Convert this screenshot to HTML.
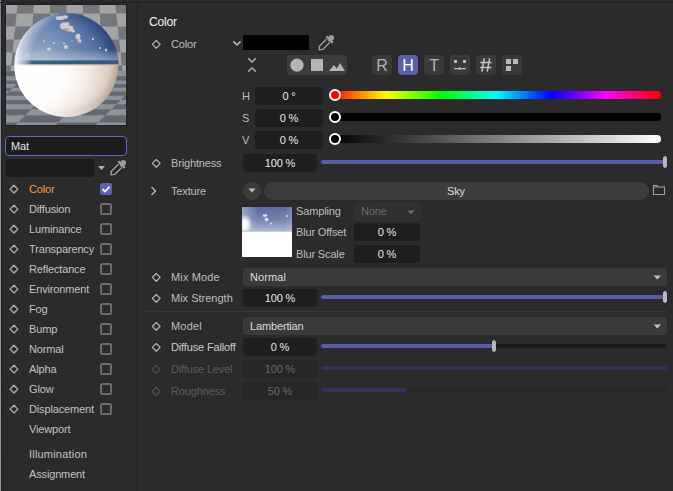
<!DOCTYPE html>
<html><head><meta charset="utf-8"><style>
html,body{margin:0;padding:0;}
body{width:673px;height:491px;background:#2b2b2b;position:relative;overflow:hidden;font-family:"Liberation Sans",sans-serif;}
body>div,body>svg{position:absolute;}
.t{white-space:nowrap;letter-spacing:-0.15px}
</style></head><body>
<div style="left:0;top:0;width:1px;height:491px;background:linear-gradient(#7886a8,#8a95a8 40%,#9a9a9a)"></div>
<div style="left:1px;top:0px;width:1px;height:491px;background:#202020;border-radius:0px;"></div>
<div style="left:0px;top:2px;width:673px;height:1px;background:#202020;border-radius:0px;"></div>
<div style="left:137px;top:4px;width:1px;height:487px;background:#202020;border-radius:0px;"></div>
<div style="left:5px;top:4px;width:122px;height:122px;background:#1f1f1f;border-radius:0px;"></div>
<svg style="left:6px;top:5px" width="120" height="120" viewBox="0 0 120 120">
<defs>
<radialGradient id="sky" gradientUnits="userSpaceOnUse" cx="32" cy="64" r="92">
<stop offset="0" stop-color="#b4c0d2"/><stop offset="0.25" stop-color="#8a9ec0"/><stop offset="0.5" stop-color="#6681b0"/><stop offset="0.75" stop-color="#4b689a"/><stop offset="1" stop-color="#304778"/>
</radialGradient>
<radialGradient id="rim" gradientUnits="userSpaceOnUse" cx="72" cy="56" r="64">
<stop offset="0" stop-color="#fff" stop-opacity="0"/><stop offset="0.72" stop-color="#fff" stop-opacity="0"/><stop offset="0.9" stop-color="#ffffff" stop-opacity="0.5"/><stop offset="1" stop-color="#ffffff" stop-opacity="1"/>
</radialGradient>
<linearGradient id="hzb" x1="0" y1="0" x2="120" y2="0" gradientUnits="userSpaceOnUse">
<stop offset="0" stop-color="#3e6a88" stop-opacity="0"/><stop offset="0.1" stop-color="#3e6a88" stop-opacity="0"/><stop offset="0.22" stop-color="#3a6080" stop-opacity="1"/><stop offset="1" stop-color="#36587a" stop-opacity="1"/>
</linearGradient>
<radialGradient id="edge" gradientUnits="userSpaceOnUse" cx="56" cy="54" r="58">
<stop offset="0" stop-color="#50443c" stop-opacity="0"/><stop offset="0.84" stop-color="#50443c" stop-opacity="0"/><stop offset="1" stop-color="#50443c" stop-opacity="0.18"/>
</radialGradient>
<radialGradient id="low" gradientUnits="userSpaceOnUse" cx="25" cy="62" r="95">
<stop offset="0" stop-color="#ffffff"/><stop offset="0.4" stop-color="#fefdfc"/><stop offset="0.6" stop-color="#f3eae4"/><stop offset="0.8" stop-color="#e0d0c4"/><stop offset="0.92" stop-color="#cdb8a8"/><stop offset="1" stop-color="#b8a290"/>
</radialGradient>
<radialGradient id="skyedge" gradientUnits="userSpaceOnUse" cx="50" cy="62" r="60">
<stop offset="0" stop-color="#1e3460" stop-opacity="0"/><stop offset="0.75" stop-color="#1e3460" stop-opacity="0"/><stop offset="1" stop-color="#1e3460" stop-opacity="0.45"/>
</radialGradient>
<linearGradient id="hz" x1="0" y1="0" x2="0" y2="1">
<stop offset="0" stop-color="#c0ccda" stop-opacity="0"/><stop offset="1" stop-color="#b8c6d6" stop-opacity="0.6"/>
</linearGradient>
<filter id="bl" x="-10%" y="-200%" width="120%" height="500%"><feGaussianBlur stdDeviation="0.7"/></filter>
<clipPath id="sp"><circle cx="60.3" cy="60" r="52"/></clipPath>
<clipPath id="top"><rect x="0" y="0" width="120" height="59.5"/></clipPath>
<clipPath id="bot"><rect x="0" y="59.5" width="120" height="61"/></clipPath>
</defs>
<rect width="120" height="120" fill="#a2a4a6"/><polygon points="-21.0,0.0 -4.7,0.0 -5.9,8.5 -22.5,8.5" fill="#747679"/><polygon points="11.6,0.0 27.9,0.0 27.3,8.5 10.7,8.5" fill="#747679"/><polygon points="44.2,0.0 60.5,0.0 60.5,8.5 43.9,8.5" fill="#747679"/><polygon points="76.8,0.0 93.1,0.0 93.7,8.5 77.1,8.5" fill="#747679"/><polygon points="109.4,0.0 125.7,0.0 126.9,8.5 110.3,8.5" fill="#747679"/><polygon points="142.0,0.0 158.3,0.0 160.1,8.5 143.5,8.5" fill="#747679"/><polygon points="-39.1,8.5 -22.5,8.5 -24.9,21.5 -41.9,21.5" fill="#747679"/><polygon points="-5.9,8.5 10.7,8.5 9.3,21.5 -7.8,21.5" fill="#747679"/><polygon points="27.3,8.5 43.9,8.5 43.4,21.5 26.4,21.5" fill="#747679"/><polygon points="60.5,8.5 77.1,8.5 77.6,21.5 60.5,21.5" fill="#747679"/><polygon points="93.7,8.5 110.3,8.5 111.7,21.5 94.6,21.5" fill="#747679"/><polygon points="126.9,8.5 143.5,8.5 145.9,21.5 128.8,21.5" fill="#747679"/><polygon points="-24.9,21.5 -7.8,21.5 -9.6,34.5 -27.2,34.5" fill="#747679"/><polygon points="9.3,21.5 26.4,21.5 25.4,34.5 7.9,34.5" fill="#747679"/><polygon points="43.4,21.5 60.5,21.5 60.5,34.5 43.0,34.5" fill="#747679"/><polygon points="77.6,21.5 94.6,21.5 95.6,34.5 78.0,34.5" fill="#747679"/><polygon points="111.7,21.5 128.8,21.5 130.6,34.5 113.1,34.5" fill="#747679"/><polygon points="145.9,21.5 162.9,21.5 165.7,34.5 148.2,34.5" fill="#747679"/><polygon points="-44.7,34.5 -27.2,34.5 -29.5,47.5 -47.5,47.5" fill="#747679"/><polygon points="-9.6,34.5 7.9,34.5 6.5,47.5 -11.5,47.5" fill="#747679"/><polygon points="25.4,34.5 43.0,34.5 42.5,47.5 24.5,47.5" fill="#747679"/><polygon points="60.5,34.5 78.0,34.5 78.5,47.5 60.5,47.5" fill="#747679"/><polygon points="95.6,34.5 113.1,34.5 114.5,47.5 96.5,47.5" fill="#747679"/><polygon points="130.6,34.5 148.2,34.5 150.5,47.5 132.5,47.5" fill="#747679"/><polygon points="-29.5,47.5 -11.5,47.5 -13.4,60.5 -31.8,60.5" fill="#747679"/><polygon points="6.5,47.5 24.5,47.5 23.6,60.5 5.1,60.5" fill="#747679"/><polygon points="42.5,47.5 60.5,47.5 60.5,60.5 42.0,60.5" fill="#747679"/><polygon points="78.5,47.5 96.5,47.5 97.4,60.5 79.0,60.5" fill="#747679"/><polygon points="114.5,47.5 132.5,47.5 134.4,60.5 115.9,60.5" fill="#747679"/><polygon points="150.5,47.5 168.5,47.5 171.3,60.5 152.8,60.5" fill="#747679"/><polygon points="-50.3,60.5 -31.8,60.5 -32.8,66.0 -51.5,66.0" fill="#747679"/><polygon points="-13.4,60.5 5.1,60.5 4.5,66.0 -14.2,66.0" fill="#747679"/><polygon points="23.6,60.5 42.0,60.5 41.8,66.0 23.2,66.0" fill="#747679"/><polygon points="60.5,60.5 79.0,60.5 79.2,66.0 60.5,66.0" fill="#747679"/><polygon points="97.4,60.5 115.9,60.5 116.5,66.0 97.8,66.0" fill="#747679"/><polygon points="134.4,60.5 152.8,60.5 153.8,66.0 135.2,66.0" fill="#747679"/><rect y="66" width="120" height="54" fill="#8e939b"/><polygon points="-96.4,66.0 -56.4,66.0 -61.6,71.2 -101.6,71.2" fill="#646971"/><polygon points="-16.4,66.0 23.6,66.0 18.4,71.2 -21.6,71.2" fill="#646971"/><polygon points="63.6,66.0 103.6,66.0 98.4,71.2 58.4,71.2" fill="#646971"/><polygon points="143.6,66.0 183.6,66.0 178.4,71.2 138.4,71.2" fill="#646971"/><polygon points="223.6,66.0 263.6,66.0 258.4,71.2 218.4,71.2" fill="#646971"/><polygon points="-141.6,71.2 -101.6,71.2 -105.8,75.4 -145.8,75.4" fill="#646971"/><polygon points="-61.6,71.2 -21.6,71.2 -25.8,75.4 -65.8,75.4" fill="#646971"/><polygon points="18.4,71.2 58.4,71.2 54.2,75.4 14.2,75.4" fill="#646971"/><polygon points="98.4,71.2 138.4,71.2 134.2,75.4 94.2,75.4" fill="#646971"/><polygon points="178.4,71.2 218.4,71.2 214.2,75.4 174.2,75.4" fill="#646971"/><polygon points="-105.8,75.4 -65.8,75.4 -69.5,79.1 -109.5,79.1" fill="#646971"/><polygon points="-25.8,75.4 14.2,75.4 10.5,79.1 -29.5,79.1" fill="#646971"/><polygon points="54.2,75.4 94.2,75.4 90.5,79.1 50.5,79.1" fill="#646971"/><polygon points="134.2,75.4 174.2,75.4 170.5,79.1 130.5,79.1" fill="#646971"/><polygon points="214.2,75.4 254.2,75.4 250.5,79.1 210.5,79.1" fill="#646971"/><polygon points="-149.5,79.1 -109.5,79.1 -113.2,82.8 -153.2,82.8" fill="#646971"/><polygon points="-69.5,79.1 -29.5,79.1 -33.2,82.8 -73.2,82.8" fill="#646971"/><polygon points="10.5,79.1 50.5,79.1 46.8,82.8 6.8,82.8" fill="#646971"/><polygon points="90.5,79.1 130.5,79.1 126.8,82.8 86.8,82.8" fill="#646971"/><polygon points="170.5,79.1 210.5,79.1 206.8,82.8 166.8,82.8" fill="#646971"/><polygon points="-113.2,82.8 -73.2,82.8 -76.8,86.4 -116.8,86.4" fill="#646971"/><polygon points="-33.2,82.8 6.8,82.8 3.2,86.4 -36.8,86.4" fill="#646971"/><polygon points="46.8,82.8 86.8,82.8 83.2,86.4 43.2,86.4" fill="#646971"/><polygon points="126.8,82.8 166.8,82.8 163.2,86.4 123.2,86.4" fill="#646971"/><polygon points="206.8,82.8 246.8,82.8 243.2,86.4 203.2,86.4" fill="#646971"/><polygon points="-156.8,86.4 -116.8,86.4 -121.1,90.7 -161.1,90.7" fill="#646971"/><polygon points="-76.8,86.4 -36.8,86.4 -41.1,90.7 -81.1,90.7" fill="#646971"/><polygon points="3.2,86.4 43.2,86.4 38.9,90.7 -1.1,90.7" fill="#646971"/><polygon points="83.2,86.4 123.2,86.4 118.9,90.7 78.9,90.7" fill="#646971"/><polygon points="163.2,86.4 203.2,86.4 198.9,90.7 158.9,90.7" fill="#646971"/><polygon points="-121.1,90.7 -81.1,90.7 -85.4,95.0 -125.4,95.0" fill="#646971"/><polygon points="-41.1,90.7 -1.1,90.7 -5.4,95.0 -45.4,95.0" fill="#646971"/><polygon points="38.9,90.7 78.9,90.7 74.6,95.0 34.6,95.0" fill="#646971"/><polygon points="118.9,90.7 158.9,90.7 154.6,95.0 114.6,95.0" fill="#646971"/><polygon points="198.9,90.7 238.9,90.7 234.6,95.0 194.6,95.0" fill="#646971"/><polygon points="-165.4,95.0 -125.4,95.0 -129.7,99.3 -169.7,99.3" fill="#646971"/><polygon points="-85.4,95.0 -45.4,95.0 -49.7,99.3 -89.7,99.3" fill="#646971"/><polygon points="-5.4,95.0 34.6,95.0 30.3,99.3 -9.7,99.3" fill="#646971"/><polygon points="74.6,95.0 114.6,95.0 110.3,99.3 70.3,99.3" fill="#646971"/><polygon points="154.6,95.0 194.6,95.0 190.3,99.3 150.3,99.3" fill="#646971"/><polygon points="-129.7,99.3 -89.7,99.3 -94.6,104.2 -134.6,104.2" fill="#646971"/><polygon points="-49.7,99.3 -9.7,99.3 -14.6,104.2 -54.6,104.2" fill="#646971"/><polygon points="30.3,99.3 70.3,99.3 65.4,104.2 25.4,104.2" fill="#646971"/><polygon points="110.3,99.3 150.3,99.3 145.4,104.2 105.4,104.2" fill="#646971"/><polygon points="190.3,99.3 230.3,99.3 225.4,104.2 185.4,104.2" fill="#646971"/><polygon points="-174.6,104.2 -134.6,104.2 -140.7,110.3 -180.7,110.3" fill="#646971"/><polygon points="-94.6,104.2 -54.6,104.2 -60.7,110.3 -100.7,110.3" fill="#646971"/><polygon points="-14.6,104.2 25.4,104.2 19.3,110.3 -20.7,110.3" fill="#646971"/><polygon points="65.4,104.2 105.4,104.2 99.3,110.3 59.3,110.3" fill="#646971"/><polygon points="145.4,104.2 185.4,104.2 179.3,110.3 139.3,110.3" fill="#646971"/><polygon points="-140.7,110.3 -100.7,110.3 -108.0,117.6 -148.0,117.6" fill="#646971"/><polygon points="-60.7,110.3 -20.7,110.3 -28.0,117.6 -68.0,117.6" fill="#646971"/><polygon points="19.3,110.3 59.3,110.3 52.0,117.6 12.0,117.6" fill="#646971"/><polygon points="99.3,110.3 139.3,110.3 132.0,117.6 92.0,117.6" fill="#646971"/><polygon points="179.3,110.3 219.3,110.3 212.0,117.6 172.0,117.6" fill="#646971"/><polygon points="-188.0,117.6 -148.0,117.6 -155.4,125.0 -195.4,125.0" fill="#646971"/><polygon points="-108.0,117.6 -68.0,117.6 -75.4,125.0 -115.4,125.0" fill="#646971"/><polygon points="-28.0,117.6 12.0,117.6 4.6,125.0 -35.4,125.0" fill="#646971"/><polygon points="52.0,117.6 92.0,117.6 84.6,125.0 44.6,125.0" fill="#646971"/><polygon points="132.0,117.6 172.0,117.6 164.6,125.0 124.6,125.0" fill="#646971"/>
<g clip-path="url(#sp)">
<rect x="0" y="0" width="120" height="59.5" fill="url(#sky)"/><rect x="0" y="0" width="120" height="59.5" fill="url(#skyedge)"/>
<rect x="0" y="44" width="120" height="11.5" fill="url(#hz)"/>

<rect x="0" y="59.5" width="120" height="61" fill="url(#low)"/><rect x="0" y="59.5" width="120" height="61" fill="url(#edge)"/><g filter="url(#bl)"><rect x="0" y="55.5" width="120" height="3.8" fill="url(#hzb)"/><rect x="0" y="59.2" width="120" height="1.5" fill="#c8beb4" opacity="0.5"/></g><circle cx="60.3" cy="60" r="52" fill="url(#rim)"/>
<g fill="#d4c8c8">
<ellipse cx="54" cy="13" rx="4.5" ry="2"/><ellipse cx="59" cy="12" rx="3" ry="1.8"/>
<ellipse cx="58" cy="21" rx="4" ry="3.5"/><ellipse cx="63" cy="23.5" rx="4.5" ry="3"/><ellipse cx="61" cy="19" rx="2.5" ry="2"/><ellipse cx="67" cy="26" rx="2" ry="1.5"/>
<ellipse cx="72" cy="31.5" rx="2.5" ry="3"/><ellipse cx="73.5" cy="36" rx="2" ry="2"/>
<ellipse cx="43" cy="44" rx="2" ry="1.8"/><ellipse cx="60" cy="42" rx="2.2" ry="2"/><ellipse cx="58" cy="38.5" rx="1" ry="1"/>
<ellipse cx="21.5" cy="50" rx="2" ry="1.5"/><ellipse cx="48" cy="38" rx="1" ry="1"/><ellipse cx="100" cy="45" rx="1.2" ry="1.5"/>
<ellipse cx="94" cy="43" rx="1" ry="1"/><ellipse cx="87" cy="34" rx="1" ry="1.2"/><ellipse cx="38" cy="36" rx="1" ry="0.8"/><ellipse cx="66" cy="36" rx="0.8" ry="0.8"/>
</g>
<g fill="#9a9098" opacity="0.6">
<ellipse cx="60" cy="24.5" rx="3" ry="1.5"/><ellipse cx="73" cy="37" rx="1.5" ry="1"/>
</g>
</g>
</svg>
<div style="left:5px;top:136px;width:120px;height:18px;border:1px solid #6267c6;border-radius:4px;background:#1c1c1c"></div>
<div class="t" style="left:11px;top:141px;font-size:11px;line-height:11px;color:#e6e6e6;">Mat</div>
<div style="left:6px;top:159px;width:88px;height:18px;background:#1c1c1c;border-radius:3px;"></div>
<svg style="left:97px;top:165px" width="9" height="6"><path d="M1 1 L8 1 L4.5 5 Z" fill="#b0b0b0"/></svg>
<svg style="left:106px;top:157px" width="24" height="22" viewBox="0 0 24 22"><path d="M12.37 7.17 L5.37 14.17 L5.1 17.9 L8.63 17.43 L15.63 10.43" fill="none" stroke="#9c9c9c" stroke-width="1.4" stroke-linejoin="round"/><path d="M12.3 4.4 L18.8 10.9" stroke="#9c9c9c" stroke-width="2.2"/><circle cx="17.3" cy="5.7" r="2.8" fill="#9c9c9c"/><path d="M14.5 7 L16.5 9" stroke="#9c9c9c" stroke-width="2.6"/></svg>
<svg style="left:0;top:0" width="673" height="491"><circle cx="13.95" cy="189.1" r="7.5" fill="none" stroke="#303030" stroke-width="1"/><path d="M13.95 185.2 L17.849999999999998 189.1 L13.95 193.0 L10.049999999999999 189.1 Z" fill="none" stroke="#b4b4b4" stroke-width="1.25" stroke-linejoin="round"/></svg>
<div class="t" style="left:29px;top:184px;font-size:11px;line-height:11px;color:#f0a030;">Color</div>
<div style="left:100px;top:183px;width:12px;height:12px;background:#5c62b0;border-radius:2px"></div>
<svg style="left:100px;top:183px" width="12" height="12"><path d="M2.6 6.2 L5 8.6 L9.6 3.6" fill="none" stroke="#fff" stroke-width="1.7"/></svg>
<svg style="left:0;top:0" width="673" height="491"><circle cx="13.95" cy="209.1" r="7.5" fill="none" stroke="#303030" stroke-width="1"/><path d="M13.95 205.2 L17.849999999999998 209.1 L13.95 213.0 L10.049999999999999 209.1 Z" fill="none" stroke="#b4b4b4" stroke-width="1.25" stroke-linejoin="round"/></svg>
<div class="t" style="left:29px;top:204px;font-size:11px;line-height:11px;color:#c2c2c2;">Diffusion</div>
<div style="left:100px;top:203px;width:8px;height:8px;border:2px solid #6a6a6a;border-radius:2px"></div>
<svg style="left:0;top:0" width="673" height="491"><circle cx="13.95" cy="229.1" r="7.5" fill="none" stroke="#303030" stroke-width="1"/><path d="M13.95 225.2 L17.849999999999998 229.1 L13.95 233.0 L10.049999999999999 229.1 Z" fill="none" stroke="#b4b4b4" stroke-width="1.25" stroke-linejoin="round"/></svg>
<div class="t" style="left:29px;top:224px;font-size:11px;line-height:11px;color:#c2c2c2;">Luminance</div>
<div style="left:100px;top:223px;width:8px;height:8px;border:2px solid #6a6a6a;border-radius:2px"></div>
<svg style="left:0;top:0" width="673" height="491"><circle cx="13.95" cy="249.1" r="7.5" fill="none" stroke="#303030" stroke-width="1"/><path d="M13.95 245.2 L17.849999999999998 249.1 L13.95 253.0 L10.049999999999999 249.1 Z" fill="none" stroke="#b4b4b4" stroke-width="1.25" stroke-linejoin="round"/></svg>
<div class="t" style="left:29px;top:244px;font-size:11px;line-height:11px;color:#c2c2c2;">Transparency</div>
<div style="left:100px;top:243px;width:8px;height:8px;border:2px solid #6a6a6a;border-radius:2px"></div>
<svg style="left:0;top:0" width="673" height="491"><circle cx="13.95" cy="269.09999999999997" r="7.5" fill="none" stroke="#303030" stroke-width="1"/><path d="M13.95 265.2 L17.849999999999998 269.09999999999997 L13.95 272.99999999999994 L10.049999999999999 269.09999999999997 Z" fill="none" stroke="#b4b4b4" stroke-width="1.25" stroke-linejoin="round"/></svg>
<div class="t" style="left:29px;top:264px;font-size:11px;line-height:11px;color:#c2c2c2;">Reflectance</div>
<div style="left:100px;top:263px;width:8px;height:8px;border:2px solid #6a6a6a;border-radius:2px"></div>
<svg style="left:0;top:0" width="673" height="491"><circle cx="13.95" cy="289.09999999999997" r="7.5" fill="none" stroke="#303030" stroke-width="1"/><path d="M13.95 285.2 L17.849999999999998 289.09999999999997 L13.95 292.99999999999994 L10.049999999999999 289.09999999999997 Z" fill="none" stroke="#b4b4b4" stroke-width="1.25" stroke-linejoin="round"/></svg>
<div class="t" style="left:29px;top:284px;font-size:11px;line-height:11px;color:#c2c2c2;">Environment</div>
<div style="left:100px;top:283px;width:8px;height:8px;border:2px solid #6a6a6a;border-radius:2px"></div>
<svg style="left:0;top:0" width="673" height="491"><circle cx="13.95" cy="309.09999999999997" r="7.5" fill="none" stroke="#303030" stroke-width="1"/><path d="M13.95 305.2 L17.849999999999998 309.09999999999997 L13.95 312.99999999999994 L10.049999999999999 309.09999999999997 Z" fill="none" stroke="#b4b4b4" stroke-width="1.25" stroke-linejoin="round"/></svg>
<div class="t" style="left:29px;top:304px;font-size:11px;line-height:11px;color:#c2c2c2;">Fog</div>
<div style="left:100px;top:303px;width:8px;height:8px;border:2px solid #6a6a6a;border-radius:2px"></div>
<svg style="left:0;top:0" width="673" height="491"><circle cx="13.95" cy="329.09999999999997" r="7.5" fill="none" stroke="#303030" stroke-width="1"/><path d="M13.95 325.2 L17.849999999999998 329.09999999999997 L13.95 332.99999999999994 L10.049999999999999 329.09999999999997 Z" fill="none" stroke="#b4b4b4" stroke-width="1.25" stroke-linejoin="round"/></svg>
<div class="t" style="left:29px;top:324px;font-size:11px;line-height:11px;color:#c2c2c2;">Bump</div>
<div style="left:100px;top:323px;width:8px;height:8px;border:2px solid #6a6a6a;border-radius:2px"></div>
<svg style="left:0;top:0" width="673" height="491"><circle cx="13.95" cy="349.09999999999997" r="7.5" fill="none" stroke="#303030" stroke-width="1"/><path d="M13.95 345.2 L17.849999999999998 349.09999999999997 L13.95 352.99999999999994 L10.049999999999999 349.09999999999997 Z" fill="none" stroke="#b4b4b4" stroke-width="1.25" stroke-linejoin="round"/></svg>
<div class="t" style="left:29px;top:344px;font-size:11px;line-height:11px;color:#c2c2c2;">Normal</div>
<div style="left:100px;top:343px;width:8px;height:8px;border:2px solid #6a6a6a;border-radius:2px"></div>
<svg style="left:0;top:0" width="673" height="491"><circle cx="13.95" cy="369.09999999999997" r="7.5" fill="none" stroke="#303030" stroke-width="1"/><path d="M13.95 365.2 L17.849999999999998 369.09999999999997 L13.95 372.99999999999994 L10.049999999999999 369.09999999999997 Z" fill="none" stroke="#b4b4b4" stroke-width="1.25" stroke-linejoin="round"/></svg>
<div class="t" style="left:29px;top:364px;font-size:11px;line-height:11px;color:#c2c2c2;">Alpha</div>
<div style="left:100px;top:363px;width:8px;height:8px;border:2px solid #6a6a6a;border-radius:2px"></div>
<svg style="left:0;top:0" width="673" height="491"><circle cx="13.95" cy="389.09999999999997" r="7.5" fill="none" stroke="#303030" stroke-width="1"/><path d="M13.95 385.2 L17.849999999999998 389.09999999999997 L13.95 392.99999999999994 L10.049999999999999 389.09999999999997 Z" fill="none" stroke="#b4b4b4" stroke-width="1.25" stroke-linejoin="round"/></svg>
<div class="t" style="left:29px;top:384px;font-size:11px;line-height:11px;color:#c2c2c2;">Glow</div>
<div style="left:100px;top:383px;width:8px;height:8px;border:2px solid #6a6a6a;border-radius:2px"></div>
<svg style="left:0;top:0" width="673" height="491"><circle cx="13.95" cy="409.09999999999997" r="7.5" fill="none" stroke="#303030" stroke-width="1"/><path d="M13.95 405.2 L17.849999999999998 409.09999999999997 L13.95 412.99999999999994 L10.049999999999999 409.09999999999997 Z" fill="none" stroke="#b4b4b4" stroke-width="1.25" stroke-linejoin="round"/></svg>
<div class="t" style="left:29px;top:404px;font-size:11px;line-height:11px;color:#c2c2c2;">Displacement</div>
<div style="left:100px;top:403px;width:8px;height:8px;border:2px solid #6a6a6a;border-radius:2px"></div>
<div class="t" style="left:29px;top:424px;font-size:11px;line-height:11px;color:#c2c2c2;">Viewport</div>
<div class="t" style="left:29px;top:449px;font-size:11px;line-height:11px;color:#c2c2c2;letter-spacing:0.2px">Illumination</div>
<div class="t" style="left:29px;top:469px;font-size:11px;line-height:11px;color:#c2c2c2;">Assignment</div>
<div class="t" style="left:149px;top:16px;font-size:12px;line-height:12px;color:#f4f4f4;">Color</div>
<svg style="left:0;top:0" width="673" height="491"><circle cx="156.25" cy="44.4" r="7.5" fill="none" stroke="#303030" stroke-width="1"/><path d="M156.25 40.5 L160.15 44.4 L156.25 48.3 L152.35 44.4 Z" fill="none" stroke="#b4b4b4" stroke-width="1.25" stroke-linejoin="round"/></svg>
<div class="t" style="left:171px;top:39px;font-size:11px;line-height:11px;color:#bdbdbd;">Color</div>
<svg style="left:232px;top:40px" width="10" height="7"><path d="M1.4 1.4 L5 5 L8.6 1.4" fill="none" stroke="#bdbdbd" stroke-width="1.5"/></svg>
<div style="left:243px;top:35px;width:66px;height:15px;background:#000000;border-radius:0px;"></div>
<svg style="left:314px;top:32px" width="24" height="22" viewBox="0 0 24 22"><path d="M12.37 7.17 L5.37 14.17 L5.1 17.9 L8.63 17.43 L15.63 10.43" fill="none" stroke="#9c9c9c" stroke-width="1.4" stroke-linejoin="round"/><path d="M12.3 4.4 L18.8 10.9" stroke="#9c9c9c" stroke-width="2.2"/><circle cx="17.3" cy="5.7" r="2.8" fill="#9c9c9c"/><path d="M14.5 7 L16.5 9" stroke="#9c9c9c" stroke-width="2.6"/></svg>
<svg style="left:247px;top:56px" width="10" height="18"><path d="M1.2 2.2 L5 6 L8.8 2.2 M1.2 15.6 L5 11.8 L8.8 15.6" fill="none" stroke="#a8a8a8" stroke-width="1.6"/></svg>
<div style="left:287px;top:55px;width:60px;height:20px;background:#3c3c3c;border-radius:4px;"></div>
<svg style="left:287px;top:55px" width="60" height="20">
<circle cx="10" cy="10.2" r="6.6" fill="#b4b4b4"/>
<rect x="24" y="4" width="12" height="12" fill="#b4b4b4"/>
<path d="M42 16 L47 10 L50 13.5 L53 8 L58 16 Z" fill="#b4b4b4"/>
</svg>
<div style="left:372px;top:55px;width:20px;height:20px;background:#3a3a3a;border-radius:4px;"></div>
<div style="left:398px;top:55px;width:20px;height:20px;background:#5a5fa8;border-radius:4px;"></div>
<div style="left:424px;top:55px;width:20px;height:20px;background:#3a3a3a;border-radius:4px;"></div>
<div style="left:450px;top:55px;width:20px;height:20px;background:#3a3a3a;border-radius:4px;"></div>
<div style="left:476px;top:55px;width:20px;height:20px;background:#3a3a3a;border-radius:4px;"></div>
<div style="left:502px;top:55px;width:20px;height:20px;background:#3a3a3a;border-radius:4px;"></div>
<div class="t" style="left:372px;top:58px;width:20px;text-align:center;font-size:16px;line-height:16px;color:#b4b4b4">R</div>
<div class="t" style="left:398px;top:58px;width:20px;text-align:center;font-size:16px;line-height:16px;color:#ffffff">H</div>
<div class="t" style="left:424px;top:58px;width:20px;text-align:center;font-size:16px;line-height:16px;color:#b4b4b4">T</div>
<svg style="left:450px;top:55px" width="20" height="20">
<rect x="4" y="5" width="3" height="3" fill="#b8b8b8"/><rect x="13" y="5" width="3" height="3" fill="#b8b8b8"/>
<rect x="4" y="13" width="12" height="1.3" fill="#b8b8b8"/><rect x="9" y="12" width="1.3" height="3" fill="#b8b8b8"/>
</svg>
<svg style="left:476px;top:55px" width="20" height="20">
<path d="M8.2 3.3 L5.9 16.6 M13.6 3.3 L11.3 16.6 M4.4 7.6 L15.6 7.6 M4.2 12.6 L15.4 12.6" stroke="#c4c4c4" stroke-width="1.5" fill="none"/>
</svg>
<svg style="left:502px;top:55px" width="20" height="20">
<rect x="4" y="4" width="5" height="5" fill="#b8b8b8"/><rect x="11" y="4" width="5" height="5" fill="#b8b8b8"/><rect x="4" y="11" width="5" height="5" fill="#b8b8b8"/>
</svg>
<div class="t" style="left:242px;top:91px;font-size:11px;line-height:11px;color:#bdbdbd;">H</div>
<div style="left:255px;top:87px;width:68px;height:18px;background:#1e1e1e;border-radius:3px;"></div>
<div class="t" style="left:249.0px;top:91px;width:80px;text-align:center;font-size:11px;line-height:11px;color:#e8e8e8">0 °</div>
<div class="t" style="left:242px;top:113px;font-size:11px;line-height:11px;color:#bdbdbd;">S</div>
<div style="left:255px;top:109px;width:68px;height:18px;background:#1e1e1e;border-radius:3px;"></div>
<div class="t" style="left:249.0px;top:113px;width:80px;text-align:center;font-size:11px;line-height:11px;color:#e8e8e8">0 %</div>
<div class="t" style="left:242px;top:135px;font-size:11px;line-height:11px;color:#bdbdbd;">V</div>
<div style="left:255px;top:131px;width:68px;height:18px;background:#1e1e1e;border-radius:3px;"></div>
<div class="t" style="left:249.0px;top:135px;width:80px;text-align:center;font-size:11px;line-height:11px;color:#e8e8e8">0 %</div>
<div style="left:331px;top:91px;width:330px;height:8px;background:linear-gradient(90deg,#ff0000 0%,#ffff00 16.7%,#00ff00 33.3%,#00ffff 50%,#0000ff 66.7%,#ff00ff 83.3%,#ff0000 100%);border-radius:4px;"></div>
<div style="left:331px;top:113px;width:330px;height:8px;background:#000;border-radius:4px;"></div>
<div style="left:331px;top:135px;width:330px;height:8px;background:linear-gradient(90deg,#000,#fff);border-radius:4px;"></div>
<div style="left:329px;top:89px;width:8px;height:8px;border:2px solid #fff;border-radius:50%;background:#ff0000"></div>
<div style="left:329px;top:111px;width:8px;height:8px;border:2px solid #fff;border-radius:50%;background:#000"></div>
<div style="left:329px;top:133px;width:8px;height:8px;border:2px solid #fff;border-radius:50%;background:#000"></div>
<svg style="left:0;top:0" width="673" height="491"><circle cx="156.25" cy="163.4" r="7.5" fill="none" stroke="#303030" stroke-width="1"/><path d="M156.25 159.5 L160.15 163.4 L156.25 167.3 L152.35 163.4 Z" fill="none" stroke="#b4b4b4" stroke-width="1.25" stroke-linejoin="round"/></svg>
<div class="t" style="left:171px;top:158px;font-size:11px;line-height:11px;color:#bdbdbd;">Brightness</div>
<div style="left:243px;top:154px;width:74px;height:18px;background:#1e1e1e;border-radius:3px;"></div>
<div class="t" style="left:240.0px;top:158px;width:80px;text-align:center;font-size:11px;line-height:11px;color:#e8e8e8">100 %</div>
<div style="left:321px;top:160px;width:346px;height:4px;background:#1c1c1c;border-radius:2px;"></div>
<div style="left:321px;top:160px;width:346px;height:4px;background:#5a5ea6;border-radius:2px;"></div>
<svg style="left:663px;top:156px" width="4" height="12"><path d="M0 2.2 Q0 1.2 1 0.6 L2 0 L3 0.6 Q4 1.2 4 2.2 L4 9.8 Q4 10.8 3 11.4 L2 12 L1 11.4 Q0 10.8 0 9.8 Z" fill="#b8b8b8"/></svg>
<svg style="left:150px;top:186px" width="7" height="10"><path d="M1.5 1 L5.5 5 L1.5 9" fill="none" stroke="#bdbdbd" stroke-width="1.3"/></svg>
<div class="t" style="left:171px;top:186px;font-size:11px;line-height:11px;color:#bdbdbd;">Texture</div>
<div style="left:243px;top:182px;width:18px;height:18px;background:#3c3c3c;border-radius:9px;"></div>
<svg style="left:248px;top:188px" width="8" height="5"><path d="M0.5 0.5 L7.5 0.5 L4 4.5 Z" fill="#c0c0c0"/></svg>
<div style="left:264px;top:182px;width:385px;height:18px;background:#3c3c3c;border-radius:9px;"></div>
<div class="t" style="left:416.0px;top:186px;width:80px;text-align:center;font-size:11px;line-height:11px;color:#dcdcdc">Sky</div>
<svg style="left:652px;top:183px" width="14" height="13"><path d="M1.5 2.5 L5 2.5 L6.5 4 L12.5 4 L12.5 11.5 L1.5 11.5 Z M1.5 4 L6.5 4" fill="none" stroke="#a0a0a0" stroke-width="1.1"/></svg>
<svg style="left:242px;top:207px" width="50" height="50" viewBox="0 0 50 50">
<defs>
<linearGradient id="tsky" x1="0" y1="0" x2="0" y2="1"><stop offset="0" stop-color="#5c6d9e"/><stop offset="0.5" stop-color="#7283b0"/><stop offset="0.85" stop-color="#9ba8c6"/><stop offset="1" stop-color="#b4bed4"/></linearGradient>
<linearGradient id="tside" x1="0" y1="0" x2="1" y2="0"><stop offset="0" stop-color="#fff" stop-opacity="0.35"/><stop offset="0.3" stop-color="#fff" stop-opacity="0"/><stop offset="0.85" stop-color="#fff" stop-opacity="0"/><stop offset="1" stop-color="#fff" stop-opacity="0.15"/></linearGradient>
<radialGradient id="tsun" cx="3" cy="17" r="7" gradientUnits="userSpaceOnUse" gradientTransform="translate(4 16) scale(1 1.5) translate(-4 -16)">
<stop offset="0" stop-color="#fff"/><stop offset="0.4" stop-color="#fff" stop-opacity="0.85"/><stop offset="1" stop-color="#fff" stop-opacity="0"/></radialGradient>
</defs>
<rect width="50" height="50" fill="#ffffff"/>
<rect width="50" height="24.5" fill="url(#tsky)"/>
<rect width="50" height="24.5" fill="url(#tside)"/>
<rect width="50" height="24.5" fill="url(#tsun)"/>
<rect y="23.5" width="50" height="1" fill="#a8b0bc" opacity="0.6"/>
<g fill="#e8e0e0"><ellipse cx="23" cy="8.5" rx="2.5" ry="1.2"/><ellipse cx="24.5" cy="12.5" rx="2" ry="1.8"/><ellipse cx="29" cy="16.5" rx="1" ry="1"/><ellipse cx="45" cy="9" rx="0.8" ry="1.2"/></g>
</svg>
<div class="t" style="left:296px;top:206px;font-size:11px;line-height:11px;color:#bdbdbd;">Sampling</div>
<div style="left:354px;top:202px;width:67px;height:19px;background:#303030;border-radius:4px;"></div>
<div class="t" style="left:361px;top:206px;font-size:11px;line-height:11px;color:#6a6a6a;">None</div>
<svg style="left:407px;top:209.5px" width="9" height="5"><path d="M0.6 0.6 L7.6 0.6 L4.1 4.2 Z" fill="#6a6a6a"/></svg>
<div class="t" style="left:296px;top:227px;font-size:11px;line-height:11px;color:#bdbdbd;">Blur Offset</div>
<div style="left:354px;top:223px;width:66px;height:18px;background:#1e1e1e;border-radius:3px;"></div>
<div class="t" style="left:347.0px;top:227px;width:80px;text-align:center;font-size:11px;line-height:11px;color:#e8e8e8">0 %</div>
<div class="t" style="left:296px;top:249px;font-size:11px;line-height:11px;color:#bdbdbd;">Blur Scale</div>
<div style="left:354px;top:245px;width:66px;height:18px;background:#1e1e1e;border-radius:3px;"></div>
<div class="t" style="left:347.0px;top:249px;width:80px;text-align:center;font-size:11px;line-height:11px;color:#e8e8e8">0 %</div>
<svg style="left:0;top:0" width="673" height="491"><circle cx="156.25" cy="277.4" r="7.5" fill="none" stroke="#303030" stroke-width="1"/><path d="M156.25 273.5 L160.15 277.4 L156.25 281.29999999999995 L152.35 277.4 Z" fill="none" stroke="#b4b4b4" stroke-width="1.25" stroke-linejoin="round"/></svg>
<div class="t" style="left:171px;top:272px;font-size:11px;line-height:11px;color:#bdbdbd;letter-spacing:0.15px">Mix Mode</div>
<div style="left:243px;top:268px;width:424px;height:18px;background:#3a3a3a;border-radius:3px;"></div>
<div class="t" style="left:250px;top:272px;font-size:11px;line-height:11px;color:#dcdcdc;letter-spacing:0.1px">Normal</div>
<svg style="left:653px;top:275px" width="9" height="5"><path d="M0.5 0.5 L8 0.5 L4.25 4.5 Z" fill="#c0c0c0"/></svg>
<svg style="left:0;top:0" width="673" height="491"><circle cx="156.25" cy="298.4" r="7.5" fill="none" stroke="#303030" stroke-width="1"/><path d="M156.25 294.5 L160.15 298.4 L156.25 302.29999999999995 L152.35 298.4 Z" fill="none" stroke="#b4b4b4" stroke-width="1.25" stroke-linejoin="round"/></svg>
<div class="t" style="left:171px;top:293px;font-size:11px;line-height:11px;color:#bdbdbd;letter-spacing:0px">Mix Strength</div>
<div style="left:243px;top:289px;width:74px;height:18px;background:#1e1e1e;border-radius:3px;"></div>
<div class="t" style="left:240.0px;top:293px;width:80px;text-align:center;font-size:11px;line-height:11px;color:#e8e8e8">100 %</div>
<div style="left:321px;top:295px;width:346px;height:4px;background:#1c1c1c;border-radius:2px;"></div>
<div style="left:321px;top:295px;width:346px;height:4px;background:#5a5ea6;border-radius:2px;"></div>
<svg style="left:663px;top:291px" width="4" height="12"><path d="M0 2.2 Q0 1.2 1 0.6 L2 0 L3 0.6 Q4 1.2 4 2.2 L4 9.8 Q4 10.8 3 11.4 L2 12 L1 11.4 Q0 10.8 0 9.8 Z" fill="#b8b8b8"/></svg>
<div style="left:147px;top:311px;width:520px;height:1px;background:#383838;border-radius:0px;"></div>
<svg style="left:0;top:0" width="673" height="491"><circle cx="156.25" cy="326.4" r="7.5" fill="none" stroke="#303030" stroke-width="1"/><path d="M156.25 322.5 L160.15 326.4 L156.25 330.29999999999995 L152.35 326.4 Z" fill="none" stroke="#b4b4b4" stroke-width="1.25" stroke-linejoin="round"/></svg>
<div class="t" style="left:171px;top:321px;font-size:11px;line-height:11px;color:#bdbdbd;letter-spacing:0.2px">Model</div>
<div style="left:243px;top:317px;width:424px;height:18px;background:#3a3a3a;border-radius:3px;"></div>
<div class="t" style="left:250px;top:321px;font-size:11px;line-height:11px;color:#dcdcdc;">Lambertian</div>
<svg style="left:653px;top:324px" width="9" height="5"><path d="M0.5 0.5 L8 0.5 L4.25 4.5 Z" fill="#c0c0c0"/></svg>
<svg style="left:0;top:0" width="673" height="491"><circle cx="156.25" cy="347.4" r="7.5" fill="none" stroke="#303030" stroke-width="1"/><path d="M156.25 343.5 L160.15 347.4 L156.25 351.29999999999995 L152.35 347.4 Z" fill="none" stroke="#b4b4b4" stroke-width="1.25" stroke-linejoin="round"/></svg>
<div class="t" style="left:171px;top:342px;font-size:11px;line-height:11px;color:#cacaca;">Diffuse Falloff</div>
<div style="left:243px;top:338px;width:74px;height:18px;background:#1e1e1e;border-radius:3px;"></div>
<div class="t" style="left:240.0px;top:342px;width:80px;text-align:center;font-size:11px;line-height:11px;color:#e8e8e8">0 %</div>
<div style="left:321px;top:344px;width:346px;height:4px;background:#1c1c1c;border-radius:2px;"></div>
<div style="left:321px;top:344px;width:173px;height:4px;background:#5a5ea6;border-radius:2px;"></div>
<svg style="left:492px;top:340px" width="4" height="12"><path d="M0 2.2 Q0 1.2 1 0.6 L2 0 L3 0.6 Q4 1.2 4 2.2 L4 9.8 Q4 10.8 3 11.4 L2 12 L1 11.4 Q0 10.8 0 9.8 Z" fill="#b8b8b8"/></svg>
<svg style="left:0;top:0" width="673" height="491"><path d="M156.25 365.5 L160.15 369.4 L156.25 373.29999999999995 L152.35 369.4 Z" fill="none" stroke="#505050" stroke-width="1.25" stroke-linejoin="round"/></svg>
<div class="t" style="left:171px;top:364px;font-size:11px;line-height:11px;color:#5c5c5c;">Diffuse Level</div>
<div style="left:243px;top:360px;width:74px;height:18px;background:#262626;border-radius:3px;"></div>
<div class="t" style="left:240.0px;top:364px;width:80px;text-align:center;font-size:11px;line-height:11px;color:#6a6a6a">100 %</div>
<div style="left:321px;top:366px;width:346px;height:4px;background:#262626;border-radius:2px;"></div>
<div style="left:321px;top:366px;width:346px;height:4px;background:#30335a;border-radius:2px;"></div>
<svg style="left:0;top:0" width="673" height="491"><path d="M156.25 387.5 L160.15 391.4 L156.25 395.29999999999995 L152.35 391.4 Z" fill="none" stroke="#505050" stroke-width="1.25" stroke-linejoin="round"/></svg>
<div class="t" style="left:171px;top:386px;font-size:11px;line-height:11px;color:#5c5c5c;">Roughness</div>
<div style="left:243px;top:382px;width:74px;height:18px;background:#262626;border-radius:3px;"></div>
<div class="t" style="left:240.0px;top:386px;width:80px;text-align:center;font-size:11px;line-height:11px;color:#6a6a6a">50 %</div>
<div style="left:321px;top:388px;width:346px;height:4px;background:#262626;border-radius:2px;"></div>
<div style="left:321px;top:388px;width:86px;height:4px;background:#30335a;border-radius:2px;"></div>
</body></html>
